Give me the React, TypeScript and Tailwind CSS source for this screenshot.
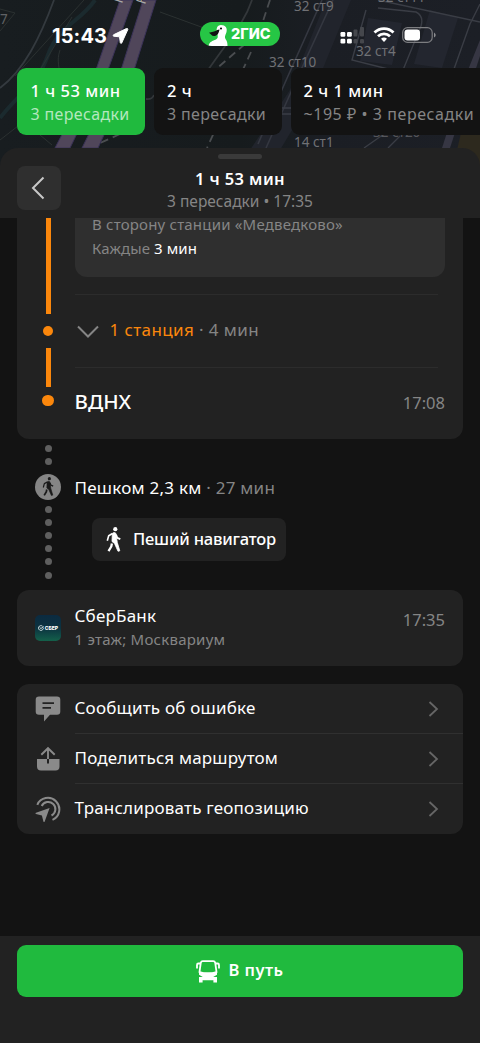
import React from "react";
import clsx from "clsx";

const routes = [
  { time: "1 ч 53 мин", info: "3 пересадки", active: true, box: "w-[128px] pl-[13.5px]", infoCls: "tracking-[0.35px]" },
  { time: "2 ч", info: "3 пересадки", active: false, box: "w-[127.5px] pl-[13px]", infoCls: "tracking-[0.35px]" },
  { time: "2 ч 1 мин", info: "~195 ₽ • 3 пересадки", active: false, box: "w-[200px] pl-[13px]", infoCls: "tracking-[0.55px]" },
];

const actions = [
  { label: "Сообщить об ошибке", icon: <ReportIcon /> },
  { label: "Поделиться маршрутом", icon: <ShareIcon /> },
  { label: "Транслировать геопозицию", icon: <BroadcastIcon /> },
];

function MapBackground() {
  return (
    <svg className="absolute inset-0" width="480" height="180" viewBox="0 0 480 180" fill="none">
      <defs>
        <linearGradient id="ground" x1="0" y1="0" x2="480" y2="0" gradientUnits="userSpaceOnUse">
          <stop offset="0" stopColor="#181d20" />
          <stop offset="0.5" stopColor="#161b1d" />
          <stop offset="0.68" stopColor="#1b1e24" />
          <stop offset="1" stopColor="#1c1f26" />
        </linearGradient>
      </defs>
      <rect width="480" height="180" fill="url(#ground)" />
      {/* blocks */}
      <path d="M326 0h25L310 100 262 180h-32l60-90z" fill="#21242c" />
      <path d="M430 10l28 8-16 50-28-4zM368 18l34 5-10 42-32-4z" fill="#23262f" />
      <path d="M480 105v75h-30l14-60z" fill="#2d291e" />
      {/* stream */}
      <path d="M95 0C80 22 58 26 48 55S20 92 0 118" stroke="#1b2a2e" strokeWidth="4" />
      {/* paths */}
      <path d="M54 0C40 38 24 70 0 88" stroke="#343a3f" strokeWidth="1.800" />
      <path d="M0 9l15 4-15 18M84 0 15 76M72 17 40 70M60 50c-4 12 0 16 0 30M0 140l18-14M40 135l12 10M160 12l44 16" stroke="#2b3131" />
      <path d="M252 0c-8 24-22 38-44 70L166 118M146 99q6 1 8-4" stroke="#33373a" strokeWidth="1.800" />
      <path d="M270 0l-12 36M251 52l-44 96M245 44l-30 26M120 134l-22 10" stroke="#4a4d50" strokeWidth="1.800" strokeDasharray="8 5" />
      <path d="M322 0 288 76l-30 68M333 0 300 72l-34 76" stroke="#343740" strokeWidth="1.600" />
      <path d="M378 8l38 4q8 4 5 14l-18 44M378 0l102 22M366 10l-14 50 88 22M281 108h14M281 114h14M480 4l-10 20-32 90" stroke="#3a3d45" strokeWidth="1.400" />
      <path d="M384 134l-20 14M400 136l-12 12" stroke="#3a3d45" strokeWidth="1.400" />
      <path d="M480 40 464 80 442 148h8l30-92z" fill="#363643" />
      {/* metro lines */}
      <path d="M120 0h13L109 67 70 148H55L97 67zM143 0h13L135 67 98 148H82L122 67z" fill="#50465a" stroke="#3a3258" />
      <g fill="#707175" fontSize="13.500" fontFamily="Noto Sans, sans-serif">
        <text x="294" y="11">32 ст9</text>
        <text x="378" y="2">32 ст11</text>
        <text x="356" y="56">32 ст4</text>
        <text x="269" y="67">32 ст10</text>
        <text x="294" y="147">14 ст1</text>
        <text x="373" y="137" fill="#55565b">32 ст20</text>
        <text x="0" y="24" fill="#606265">7</text>
        <text transform="translate(122 4) rotate(-72)" fill="#aaa">К</text>
        <text transform="translate(145 5) rotate(-72)" fill="#aaa">К</text>
      </g>
    </svg>
  );
}

function StatusBar() {
  return (
    <div className="relative flex h-[68px] items-start pt-[22px]">
      <span className="ml-[52px] w-[56px] font-[Inter] text-[20px] leading-[28px] font-bold tracking-[0.1px] whitespace-nowrap">
        15:43
      </span>
      <svg className="mt-[5px] ml-[4px]" width="17" height="18" viewBox="0 0 17 18">
        <path
          d="M14.500 1.500 1.500 7.800q-1 1 .2 1.400l5.800.6.800 6q.5 1.200 1.400.2L15.800 2.500q.2-1.300-1.300-1z"
          fill="#fff"
          stroke="#fff"
          strokeWidth="1"
          strokeLinejoin="round"
        />
      </svg>
      <div className="ml-[71px] flex h-[24px] w-[80px] items-center overflow-hidden rounded-full bg-[#26c645]">
        <svg className="ml-[8px] shrink-0" width="21" height="24" viewBox="0 0 21 24">
          <path d="M.5 24c1-4.500 4-5 7.500-6.500 2-1 2-3 1.500-5C7.500 7 9 3 13 3c4.500 0 6.500 3 5.500 7-.8 3-2.300 4.500-1 7 1.500 2 2 3.500 2 7z" fill="#fff" />
          <path d="M11.500 7.500c-2 0-3.500 1.500-5.500 2L1 10.800c2 1 2.500 3.300 5 3.300 3 0 5-3 5.500-6.600z" fill="#111" />
          <circle cx="13" cy="6.500" r="1.100" fill="#111" />
        </svg>
        <span className="ml-[2px] font-[Inter] text-[14.5px] leading-[24px] font-extrabold">2ГИС</span>
      </div>
      <svg className="mt-[4px] ml-[59px]" width="26" height="18" viewBox="0 0 26 18">
        <g fill="#fff">
          <rect x="1.500" y="6" width="4.800" height="4.800" rx="1.200" />
          <rect x="8" y="6" width="4.800" height="4.800" rx="1.200" />
          <rect x="1.500" y="12.700" width="4.800" height="4.800" rx="1.200" />
          <rect x="8" y="12.700" width="4.800" height="4.800" rx="1.200" />
        </g>
        <g fill="#45474c">
          <rect x="14.500" y="3.500" width="4" height="7" rx="1" />
          <rect x="21" y="1" width="4" height="9.500" rx="1" />
          <rect x="14.500" y="13" width="4" height="4.500" rx="1.200" />
          <rect x="21" y="13" width="4" height="4.500" rx="1.200" />
        </g>
      </svg>
      <svg className="mt-[5px] ml-[8px]" width="22" height="16" viewBox="0 0 22 16" fill="none" stroke="#fff" strokeWidth="2.800">
        <path d="M1.500 5.500a13.500 13.500 0 0 1 19 0" />
        <path d="M5 9.300a8.600 8.600 0 0 1 12 0" />
        <path d="m11 15-3-3.200a4.500 4.500 0 0 1 6 0z" fill="#fff" stroke="none" />
      </svg>
      <svg className="mt-[5px] ml-[7px]" width="34" height="16" viewBox="0 0 34 16">
        <rect x=".7" y=".7" width="29.500" height="14.600" rx="4.800" fill="none" stroke="#7c7d80" strokeWidth="1.200" />
        <rect x="2.500" y="2.600" width="15.500" height="10.800" rx="3" fill="#fff" />
        <path d="M32 5.500q1.700 1 1.700 2.500T32 10.500z" fill="#8c8d90" />
      </svg>
    </div>
  );
}

function RouteChips() {
  return (
    <div className="relative flex gap-[9px] pl-[17px]">
      {routes.map((r, i) => (
        <div
          key={i}
          className={clsx(
            "h-[67px] shrink-0 rounded-[9px] pt-[11px] whitespace-nowrap",
            r.box,
            r.active ? "bg-[#20ba3e]" : "bg-[#131313]"
          )}
        >
          <div className="text-[16.5px] leading-[23px] font-medium tracking-[0.5px]">{r.time}</div>
          <div
            className={clsx(
              "text-[16px] leading-[24px]",
              r.infoCls,
              r.active ? "text-[#b4e8be]" : "text-[#858585]"
            )}
          >
            {r.info}
          </div>
        </div>
      ))}
    </div>
  );
}

function SheetHeader() {
  return (
    <div className="relative h-[70px] shrink-0 rounded-t-[18px] bg-[#222]">
      <div className="absolute top-[6px] left-[218px] h-[5px] w-[44px] rounded-full bg-[#3a3a3a]" />
      <button className="absolute top-[18px] left-[17px] flex size-[44px] items-center justify-center rounded-[8px] bg-[#2f2f2f]">
        <svg className="mr-[2px]" width="14" height="24" viewBox="0 0 14 24" fill="none" stroke="#c8c8c8" strokeWidth="2">
          <path d="M12.500 1.500 2 12l10.500 10.500" />
        </svg>
      </button>
      <div className="pt-[19px] text-center">
        <div className="text-[16.5px] leading-[23px] font-semibold tracking-[0.4px]">1 ч 53 мин</div>
        <div className="text-[15.5px] leading-[23px] text-[#858585]">3 пересадки • 17:35</div>
      </div>
    </div>
  );
}

function MetroCard() {
  return (
    <div className="mx-[17px] flex h-[221px] rounded-b-[12px] bg-[#222]">
      <div className="ml-[18px] flex w-[26px] shrink-0 flex-col items-center">
        <div className="h-[95.500px] w-[5px] bg-[#fb870c]" />
        <div className="mt-[12px] size-[10px] rounded-full bg-[#fb870c]" />
        <div className="mt-[12.500px] h-[39px] w-[5px] bg-[#fb870c]" />
        <div className="mt-[7.500px] size-[11.500px] rounded-full bg-[#fb870c]" />
      </div>
      <div className="ml-[13.500px] flex-1">
        <div className="mr-[18px] h-[59px] overflow-hidden rounded-b-[12px] bg-[#2f2f2f] pl-[17.500px] text-[15px] text-[#858585]">
          <div className="-mt-[6px] leading-[24px] tracking-[0.2px]">В сторону станции «Медведково»</div>
          <div className="leading-[24px] tracking-[0.1px]">
            Каждые <span className="text-white">3 мин</span>
          </div>
        </div>
        <div className="mt-[17px] mr-[25px] flex h-[74px] items-center border-y border-[#2c2c2c]">
          <svg className="ml-[2px]" width="22" height="13" viewBox="0 0 22 13" fill="none" stroke="#858585" strokeWidth="2">
            <path d="m1 1.500 10 10 10-10" />
          </svg>
          <span className="-mt-[2px] ml-[11px] text-[17px] leading-[24px] tracking-[0.4px] text-[#858585]">
            <span className="text-[#fb870c]">1 станция</span> · 4 мин
          </span>
        </div>
        <div className="flex items-center justify-between pt-[18px] pr-[18px]">
          <span className="text-[20.5px] leading-[30px] font-medium">ВДНХ</span>
          <span className="mt-[3px] text-[16.5px] leading-[24px] text-[#858585]">17:08</span>
        </div>
      </div>
    </div>
  );
}

function Dots({ count }: { count: number }) {
  return (
    <div className="flex flex-col items-center gap-[6.100px]">
      {Array.from({ length: count }, (_, i) => (
        <span key={i} className="size-[7px] rounded-full bg-[#5f5f5f]" />
      ))}
    </div>
  );
}

function WalkMan({ className, color, w, h }: { className?: string; color: string; w: number; h: number }) {
  return (
    <svg className={className} width={w} height={h} viewBox="0 0 15 25" fill="none" stroke={color} strokeLinejoin="round">
      <circle cx="9.300" cy="2.200" r="2.100" fill={color} stroke="none" />
      <path d="M6.300 6.500Q8 4.600 9.800 6.200L11.300 15.500 13.800 23.800 12 24.300 8.500 16.500 6 14.500z" fill={color} strokeWidth=".8" />
      <path d="M6.500 6.500 2.700 8.700 1.300 13.800" strokeWidth="1.600" />
      <path d="M10 7.500l1.300 3.300 3 1.300" strokeWidth="1.800" />
      <path d="M5.900 16.500 5.300 19.500 2.500 24.200" strokeWidth="2.300" />
    </svg>
  );
}

function WalkSegment() {
  return (
    <div className="ml-[35px] flex h-[151px]">
      <div className="flex w-[26px] shrink-0 flex-col items-center pt-[6px]">
        <Dots count={2} />
        <div className="mt-[8.500px] mb-[6.500px] flex size-[26px] shrink-0 items-center justify-center rounded-full bg-[#858585]">
          <WalkMan color="#1a1a1a" w={12} h={19} />
        </div>
        <Dots count={6} />
      </div>
      <div className="ml-[13.500px] pt-[36px]">
        <div className="text-[17px] leading-[25px] tracking-[0.25px]">
          Пешком 2,3 км <span className="text-[#858585]">· 27 мин</span>
        </div>
        <button className="mt-[18px] ml-[17.500px] flex h-[43px] w-[194px] items-center rounded-[8px] bg-[#222] pl-[14px] text-[16.5px] font-medium tracking-[-0.2px] whitespace-nowrap">
          <WalkMan color="#fff" w={15} h={25} className="shrink-0" />
          <span className="ml-[12px]">Пеший навигатор</span>
        </button>
      </div>
    </div>
  );
}

function PlaceCard() {
  return (
    <div className="mx-[17px] flex h-[76px] rounded-[12px] bg-[#222] pr-[18px] pl-[18px]">
      <div className="mt-[25px] flex size-[26px] shrink-0 items-center justify-center gap-[1px] rounded-[5px] bg-linear-to-b from-[#0b2a40] via-[#0c3340] to-[#14604a]">
        <svg width="6" height="6" viewBox="0 0 6 6" fill="none" stroke="#e4eef0" strokeWidth=".9">
          <path d="M5.300 2.600A2.400 2.400 0 1 1 4.500 1.200M1.800 2.700l1.200.8L5.600 1.500" />
        </svg>
        <span className="font-[Inter] text-[5px] leading-[6px] font-extrabold">СБЕР</span>
      </div>
      <div className="ml-[13.500px] flex-1 pt-[13px]">
        <div className="text-[17px] leading-[25px] tracking-[0.2px]">СберБанк</div>
        <div className="text-[15px] leading-[22px] tracking-[0.25px] text-[#858585]">1 этаж; Москвариум</div>
      </div>
      <span className="pt-[18px] text-[16.5px] leading-[24px] text-[#858585]">17:35</span>
    </div>
  );
}

function ReportIcon() {
  return (
    <svg width="26" height="26" viewBox="0 0 26 26">
      <path d="M4 .5h18a3.300 3.300 0 0 1 3.300 3.300v11.700a3.300 3.300 0 0 1-3.300 3.300h-7L9 25.500v-6.700H4a3.300 3.300 0 0 1-3.300-3.300V3.800A3.300 3.300 0 0 1 4 .5z" fill="#8a8a8a" />
      <path d="M7.500 7.200h11.500M7.500 11.800h8.500" stroke="#222" strokeWidth="1.700" />
    </svg>
  );
}

function ShareIcon() {
  return (
    <svg width="26" height="26" viewBox="0 0 26 26" fill="none" stroke="#8a8a8a" strokeWidth="1.900">
      <path d="M2 13h10v4.500h2V13h10.500v7.500q0 4-4 4H6q-4 0-4-4z" fill="#8a8a8a" stroke="none" />
      <path d="M13 13V2M6.300 8.800 13 2.200l6.700 6.600" />
    </svg>
  );
}

function BroadcastIcon() {
  return (
    <svg width="26" height="26" viewBox="0 0 26 26" fill="none" stroke="#8a8a8a" strokeWidth="2">
      <path d="M2.300 8.800A11.500 11.500 0 1 1 17.500 23.900" />
      <path d="M6.700 10A7.200 7.200 0 1 1 16.500 19.500" />
      <path d="M14.600 12 1 16.700q-1 .8 0 1.200l5.900 1.500 1.500 6q.7 1 1.300 0z" fill="#8a8a8a" stroke="none" />
    </svg>
  );
}

function ActionList() {
  return (
    <div className="mx-[17px] mt-[18px] h-[150px] overflow-hidden rounded-[12px] bg-[#222]">
      {actions.map((a, i) => (
        <div key={a.label} className="flex h-[50px] items-center pl-[18px]">
          <span className="shrink-0">{a.icon}</span>
          <div
            className={clsx(
              "ml-[13.500px] flex h-[50px] flex-1 items-center justify-between pr-[24px]",
              i < actions.length - 1 && "border-b border-[#303030]"
            )}
          >
            <span className="-mt-[2px] text-[17px] leading-[24px] tracking-[0.2px]">{a.label}</span>
            <svg width="11" height="16" viewBox="0 0 11 16" fill="none" stroke="#666" strokeWidth="1.800">
              <path d="m1.500 1 7.500 7-7.500 7" />
            </svg>
          </div>
        </div>
      ))}
    </div>
  );
}

function BottomBar() {
  return (
    <div className="h-[107px] shrink-0 bg-[#222] px-[17px] pt-[9px]">
      <button className="flex h-[52px] w-full items-center justify-center rounded-[9px] bg-[#20ba3e]">
        <svg width="24" height="23" viewBox="0 0 24 23" fill="none" stroke="#fff">
          <path d="M6.700 1.200h10.600q1.500 0 1.900 1.500l1.300 9.300q-8.500 2.500-17 0l1.300-9.300q.4-1.500 1.900-1.500z" strokeWidth="1.800" />
          <path d="M4.500 3.500H2.300Q1 3.500 1 5v3.500M19.500 3.500h2.200Q23 3.500 23 5v3.500" strokeWidth="1.800" />
          <path d="M3 11.500q9 3 18 0v3.200l-3.800 2.300h3.800v5.500h-3.600v-2.300H6.600v2.300H3V17h3.800L3 14.700z" fill="#fff" stroke="none" />
        </svg>
        <span className="-mt-[2px] ml-[8px] text-[16.5px] leading-[24px] font-semibold tracking-[0.5px]">В путь</span>
      </button>
    </div>
  );
}

export default function App() {
  return (
    <div className="relative flex h-[1043px] w-[480px] flex-col overflow-hidden bg-[#131313] font-['Noto_Sans',sans-serif] text-white">
      <MapBackground />
      <div className="h-[148px] shrink-0">
        <StatusBar />
        <RouteChips />
      </div>
      <SheetHeader />
      <div className="relative flex-1 overflow-hidden bg-[#131313]">
        <MetroCard />
        <WalkSegment />
        <PlaceCard />
        <ActionList />
      </div>
      <BottomBar />
    </div>
  );
}
